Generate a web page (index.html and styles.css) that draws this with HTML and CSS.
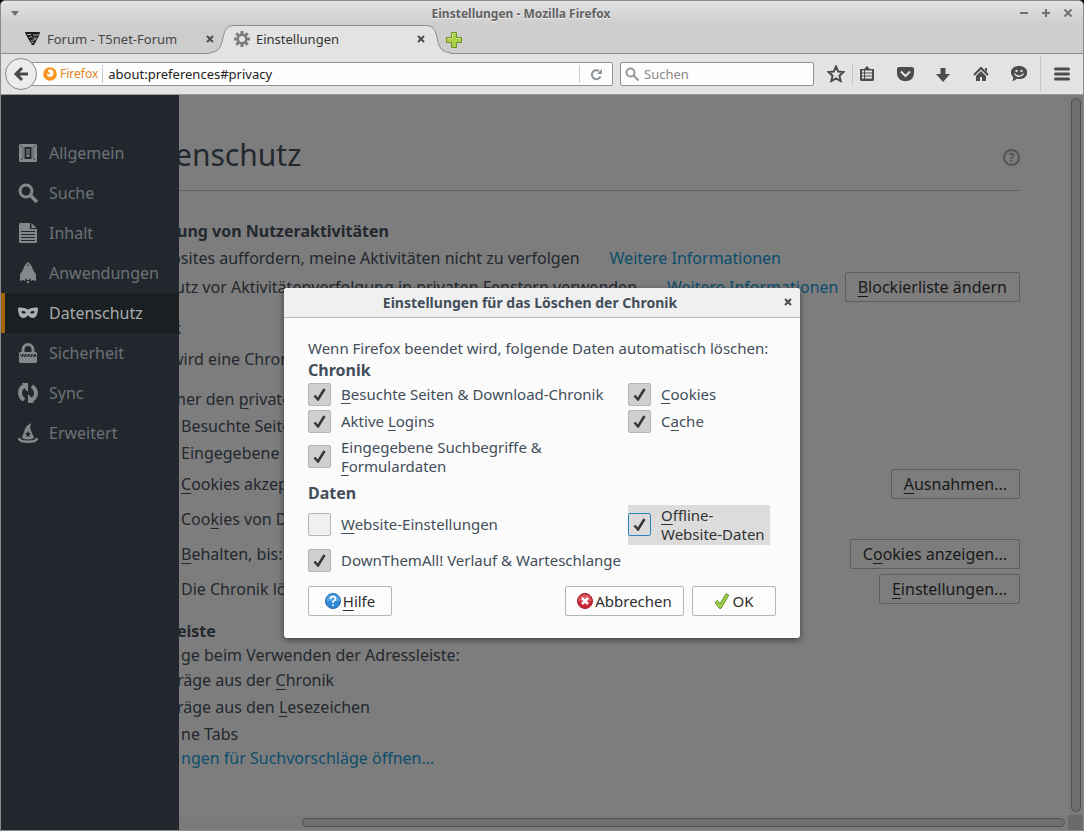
FILE: index.html
```
<!DOCTYPE html>
<html lang="de">
<head>
<meta charset="utf-8">
<title>Einstellungen - Mozilla Firefox</title>
<link rel="stylesheet" href="styles.css">
</head>
<body>
<div class="window">
  <header class="titlebar">
    <button class="wm-button wm-menu" aria-label="Fenstermenü"><svg width="8" height="5"><path d="M0 0h8L4 5z" fill="#707070"/></svg></button>
    <h1 class="window-title">Einstellungen - Mozilla Firefox</h1>
    <div class="wm-buttons">
      <button class="wm-button" aria-label="Minimieren"><svg width="10" height="10"><path d="M1 5h8" stroke="#707070" stroke-width="2"/></svg></button>
      <button class="wm-button" aria-label="Maximieren"><svg width="10" height="10"><path d="M1 5h8M5 1v8" stroke="#707070" stroke-width="2"/></svg></button>
      <button class="wm-button" aria-label="Schließen"><svg width="10" height="10"><path d="M1.500 1.500l7 7M8.500 1.500l-7 7" stroke="#707070" stroke-width="2"/></svg></button>
    </div>
  </header>

  <nav class="tabs" aria-label="Tabs">
    <div class="tab">
      <svg class="tab-icon" width="16" height="16" viewBox="0 0 16 16"><path d="M0 1h15L14 5 9 14H7L1 4z" fill="#1d1d1d"/><path d="M2 3.500h4M8 4h6M4 6.500l3-1M8 7h4M6 9.500l5-1M6 12l3-1" stroke="#aaa" stroke-width="1"/></svg>
      <span class="tab-label">Forum - T5net-Forum</span>
      <button class="tab-close" aria-label="Tab schließen"><svg width="8" height="8"><path d="M1 1l6 6M7 1L1 7" stroke="#4c4c4c" stroke-width="2"/></svg></button>
    </div>
    <div class="tab-active">
      <svg class="curve" width="24" height="29" viewBox="0 0 24 29"><path d="M0 29V28C20 27 6 1 24 .5V29z" fill="#e3e3e3"/><path d="M0 27.500C19 27 7 .5 24 .5" fill="none" stroke="#8e8e8e"/></svg>
      <div class="tab-body">
        <svg class="tab-icon" width="16" height="16" viewBox="0 0 16 16"><g stroke="#7b7b7b" stroke-width="3"><path d="M8 0v16M0 8h16M2.300 2.300l11.400 11.400M13.700 2.300L2.300 13.700"/></g><circle cx="8" cy="8" r="5.400" fill="#7b7b7b"/><circle cx="8" cy="8" r="3" fill="#e3e3e3"/></svg>
        <span class="tab-label">Einstellungen</span>
        <button class="tab-close tab-close-active" aria-label="Tab schließen"><svg width="8" height="8"><path d="M1 1l6 6M7 1L1 7" stroke="#4c4c4c" stroke-width="2"/></svg></button>
      </div>
      <svg class="curve" width="24" height="29" viewBox="0 0 24 29"><path d="M24 29V28C4 27 18 1 0 .5V29z" fill="#e3e3e3"/><path d="M24 27.500C5 27 17 .5 0 .5" fill="none" stroke="#8e8e8e"/></svg>
    </div>
    <button class="new-tab" aria-label="Neuer Tab"><svg width="16" height="16"><path d="M5.500.5h5v5h5v5h-5v5h-5v-5h-5v-5h5z" fill="#a9cf46" stroke="#6f8f24"/><path d="M6.500 5.500v-4h3M1.500 6.500h5M10 6.500h4.500" fill="none" stroke="#cfe68c"/></svg></button>
  </nav>

  <div class="toolbar">
    <button class="back" aria-label="Zurück"><svg width="16" height="16"><path d="M15 8H3M9 2L3 8l6 6" fill="none" stroke="#4a4a4a" stroke-width="3"/></svg></button>
    <div class="url-box">
      <svg width="14" height="14" viewBox="0 0 14 14"><circle cx="7" cy="7" r="6.800" fill="#f7931e"/><path d="M5 3.500c1-1.500 4-1.500 5 .5 1.500 3-.5 6-3 6C5 10 3.500 8.500 4 6.500l2 1 1.500-1L5.500 5z" fill="#fff"/></svg>
      <span class="identity">Firefox</span>
      <input class="url-input" type="text" aria-label="Adresse" value="about:preferences#privacy">
      <button class="reload" aria-label="Neu laden"><svg width="13" height="13" viewBox="0 0 13 13"><path d="M10.500 8.500A4.500 4.500 0 1 1 9 3" fill="none" stroke="#8a9199" stroke-width="2"/><path d="M12 1v5H7z" fill="#8a9199"/></svg></button>
    </div>
    <div class="search-box">
      <svg width="14" height="14"><circle cx="5.500" cy="5.500" r="4" fill="none" stroke="#999" stroke-width="2"/><path d="M8.500 8.500l5 5" stroke="#999" stroke-width="2"/></svg>
      <input class="search-input" type="text" aria-label="Suche" placeholder="Suchen">
    </div>
    <button class="tool tool-star" aria-label="Lesezeichen"><svg width="18" height="18"><path d="M9 1.500l2.200 5 5.300.6-4 3.600 1.200 5.300L9 13.300 4.300 16l1.200-5.300-4-3.600 5.300-.6z" fill="none" stroke="#4c4c4c" stroke-width="2"/></svg></button>
    <button class="tool tool-list" aria-label="Lesezeichenliste"><svg width="16" height="16"><path d="M1 3h4l3-3 3 3h4v11l-1 1H2l-1-1z" fill="#4c4c4c"/><path d="M3 5.500h2M6 5.500h7M3 8.500h2M6 8.500h7M3 11.500h2M6 11.500h7" stroke="#e5e5e5" stroke-width="2"/></svg></button>
    <button class="tool" aria-label="Pocket"><svg width="17" height="16"><path d="M2 1h13q2 0 2 2v4c0 11-17 11-17 0V3q0-2 2-2z" fill="#4c4c4c"/><path d="M4 5.500l4.500 4.500L13 5.500" fill="none" stroke="#e3e3e3" stroke-width="2"/></svg></button>
    <button class="tool" aria-label="Downloads"><svg width="14" height="15"><path d="M4.500 1h5v6H14l-7 8-7-8h4.500z" fill="#4c4c4c"/></svg></button>
    <button class="tool" aria-label="Startseite"><svg width="16" height="16"><path d="M1 9l7-7 7 7" fill="none" stroke="#4c4c4c" stroke-width="2"/><path d="M12 2h2v4l-2-2zM3 10l5-5 5 5v5H9v-4H7v4H3z" fill="#4c4c4c"/></svg></button>
    <button class="tool" aria-label="Hello"><svg width="16" height="16"><path d="M8 0c11 0 11 13 0 13-1 0-1.500 0-2.500-.3Q4 15 1 15q2-2 1-4C-3 6 1 0 8 0z" fill="#4c4c4c"/><circle cx="5.500" cy="5" r="1.200" fill="#e3e3e3"/><circle cx="10.500" cy="5" r="1.200" fill="#e3e3e3"/><path d="M3.500 7.500c2 3.500 7 3.500 9 0" fill="none" stroke="#e3e3e3" stroke-width="1.500"/></svg></button>
    <button class="tool tool-menu" aria-label="Menü"><svg width="16" height="14"><path d="M1.500 2h13M1.500 7h13M1.500 12h13" stroke="#4c4c4c" stroke-width="3" stroke-linecap="round"/></svg></button>
  </div>

  <div class="page">
    <nav class="sidebar" aria-label="Kategorien">
      <a class="category" href="#general"><svg width="20" height="20"><path d="M2 1h16l1 1v16l-1 1H2l-1-1V2z" fill="#85888a"/><path d="M5 4v12M15 4v12" stroke="#5c6064"/><path d="M7.500 5h5v10h-5z" fill="none" stroke="#22272e" stroke-width="2"/><path d="M10 7v5" stroke="#22272e" stroke-width="1"/><path d="M3 3.500h1M16 3.500h1M3 16.500h1M16 16.500h1" stroke="#22272e"/></svg>Allgemein</a>
      <a class="category" href="#search"><svg width="20" height="20"><circle cx="8" cy="8" r="6" fill="none" stroke="#85888a" stroke-width="3"/><path d="M12 12l7 7" stroke="#85888a" stroke-width="3.500"/></svg>Suche</a>
      <a class="category" href="#content"><svg width="20" height="20"><path d="M2 0h10v6h7v13l-1 1H2l-1-1V1z" fill="#85888a"/><path d="M13.500 0l5 5h-5z" fill="#85888a"/><path d="M3 8.500h14M3 11.500h14M3 14.500h14M3 17.500h14" stroke="#22272e"/></svg>Inhalt</a>
      <a class="category" href="#applications"><svg width="20" height="22"><path d="M10 0c3 2 4.500 5 5 8l3 4v7l-3-1-2 1-1-3-1 2H9l-1-2-1 3-2-1-3 1v-7l3-4c.5-3 2-6 5-8z" fill="#85888a"/><path d="M8 4l2-2 2 2z" fill="#4c5156"/><path d="M8.500 19h3L10 22z" fill="#85888a"/></svg>Anwendungen</a>
      <a class="category category-selected" href="#privacy"><svg width="20" height="12"><path d="M0 1c3-1 7 0 10 1.500C13 1 17 0 20 1c0 6-2 10-5 10-2 0-4-1-5-3-1 2-3 3-5 3-3 0-5-4-5-10z" fill="#adb0b1"/><path d="M3 5q2.500-2 5 .5Q6 8 3 5zM17 5q-2.500-2-5 .5Q14 8 17 5z" fill="#1a1f22"/></svg>Datenschutz</a>
      <a class="category" href="#security"><svg width="20" height="20"><path d="M5 11V6.500a5 5 0 0 1 10 0V11" fill="none" stroke="#85888a" stroke-width="3"/><path d="M2 9h16l1 1v9l-1 1H2l-1-1v-9z" fill="#85888a"/><path d="M2 11l2 3 1-3 2 3 1-3 2 3 1-3 2 3 1-3 2 3 1-3 1 3" fill="none" stroke="#22272e"/></svg>Sicherheit</a>
      <a class="category" href="#sync"><svg width="20" height="20"><path d="M8 2.500Q2 4 2 10q0 4 4 7M12 17.500q6-1.500 6-7.500 0-4-4-7" fill="none" stroke="#85888a" stroke-width="4"/><path d="M4 0h6v9L7 6zM16 20h-6v-9l3 3z" fill="#85888a"/></svg>Sync</a>
      <a class="category" href="#advanced"><svg width="20" height="20"><path d="M13 0l-1 5 4 10q-6 3-12 0L7 6q2-4 6-6z" fill="#85888a"/><path d="M1 15c0 5 18 5 18 0" fill="none" stroke="#85888a" stroke-width="2.500"/><path d="M10 8l1 2 2 .3-1.500 1.500.3 2.200-1.800-1-1.800 1 .3-2.200L7 10.300l2-.3z" fill="#22272e"/></svg>Erweitert</a>
    </nav>

    <main class="content">
      <div class="content-head">
        <h2 class="content-title">enschutz</h2>
        <a class="help" href="#help" aria-label="Hilfe">?</a>
      </div>

      <section class="group group-first">
        <h3 class="group-title">ung von Nutzeraktivitäten</h3>
        <p class="row cut">bsites auffordern<!-- -->, meine Aktivitäten nicht zu verfolgen<a class="link more" href="#dnt">Weitere Informationen</a></p>
        <div class="row row-control"><span>utz vor Aktivitätenverfolgung in privaten Fenstern verwenden</span><a class="link more" href="#tracking">Weitere Informationen</a><button class="button"><u>B</u>lockierliste ändern</button></div>
      </section>

      <section class="group">
        <h3 class="group-title cut">k</h3>
        <p class="row row-mode cut">wird eine Chronik</p>
        <p class="row row-private cut">mer den <u>p</u>rivaten</p>
        <p class="row inset">Besuchte Seiten</p>
        <p class="row inset">Eingegebene <u>S</u>uch</p>
        <div class="row row-wide inset"><span><u>C</u>ookies akzeptieren</span><button class="button"><u>A</u>usnahmen...</button></div>
        <div class="row row-wide inset"><span>Coo<u>k</u>ies von Dritt</span></div>
        <div class="row row-wide inset"><span><u>B</u>ehalten, bis:</span><button class="button">C<u>o</u>okies anzeigen...</button></div>
        <div class="row row-wide inset"><span>Die Chronik löschen</span><button class="button"><u>E</u>instellungen...</button></div>
      </section>

      <section class="group">
        <h3 class="group-title">eiste</h3>
        <p class="row row-tight inset">ge beim Verwenden der Adressleiste:</p>
        <p class="row">räge aus der <u>C</u>hronik</p>
        <p class="row">räge aus den <u>L</u>esezeichen</p>
        <p class="row inset">ne Tabs</p>
        <p class="row row-tight inset"><a class="link" href="#suggest">ngen für Suchvorschläge öffnen...</a></p>
      </section>
    </main>

    <div class="track track-y"><div class="thumb"></div></div>
    <div class="track track-x"><div class="thumb"></div></div>
    <div class="track-corner"></div>

    <div class="overlay">
      <div class="dialog" role="dialog" aria-labelledby="dialog-title">
        <div class="dialog-head">
          <h2 class="dialog-title" id="dialog-title">Einstellungen für das Löschen der Chronik</h2>
          <button class="dialog-close" aria-label="Schließen"><svg width="8" height="8"><path d="M1 1l6 6M7 1L1 7" stroke="#4c4c4c" stroke-width="2"/></svg></button>
        </div>
        <form class="dialog-body">
          <p class="intro">Wenn Firefox beendet wird, folgende Daten automatisch löschen:</p>
          <h3 class="legend">Chronik</h3>
          <div class="options">
            <label class="option"><input class="check" type="checkbox" checked><span><u>B</u>esuchte Seiten &amp; Download-Chronik</span></label>
            <label class="option"><input class="check" type="checkbox" checked><span><u>C</u>ookies</span></label>
            <label class="option"><input class="check" type="checkbox" checked><span>Aktive <u>L</u>ogins</span></label>
            <label class="option"><input class="check" type="checkbox" checked><span>C<u>a</u>che</span></label>
            <label class="option option-tall"><input class="check" type="checkbox" checked><span>Eingegebene Suchbegriffe &amp;<br><u>F</u>ormulardaten</span></label>
          </div>
          <h3 class="legend legend-data">Daten</h3>
          <div class="options">
            <label class="option option-site"><input class="check" type="checkbox"><span><u>W</u>ebsite-Einstellungen</span></label>
            <label class="option option-site option-focus"><input class="check" type="checkbox" checked><span><u>O</u>ffline-<br>Website-Daten</span></label>
            <label class="option option-last"><input class="check" type="checkbox" checked><span>DownThemAll! Verlauf &amp; Warteschlange</span></label>
          </div>
          <div class="actions">
            <button class="action action-help" type="button"><svg width="16" height="16"><circle cx="8" cy="8" r="7.500" fill="#3189d6" stroke="#2367aa"/><path d="M1.500 8a6.500 6.500 0 0 1 13 0z" fill="#5aa9e8"/><path d="M5.500 6q0-2.500 2.500-2.500T10.500 6Q10.500 7.500 8 8.500V10M8 11.300v1.700" fill="none" stroke="#fff" stroke-width="1.500"/></svg><span><u>H</u>ilfe</span></button>
            <button class="action action-cancel" type="button"><svg width="16" height="16"><circle cx="8" cy="8" r="7.500" fill="#cc2a3a" stroke="#9c1b28"/><path d="M1.500 8a6.500 6.500 0 0 1 13 0z" fill="#dc5560"/><path d="M5 5l6 6M11 5l-6 6" stroke="#fff" stroke-width="2.500"/></svg>Abbrechen</button>
            <button class="action action-ok" type="button"><svg width="16" height="16"><path d="M1 9.500l2.500-2 2.500 3.500L12 .8l2.800 1.400L7 15.400H5.500z" fill="#9fd046" stroke="#5f8f22"/></svg>OK</button>
          </div>
        </form>
      </div>
    </div>
  </div>
</div>
</body>
</html>
```
FILE: styles.css
```
* { box-sizing: border-box; }
html { background: #000; }
body {
  margin: 0;
  font-family: "Noto Sans", "Open Sans", sans-serif;
  font-size: 16px;
  color: #424e5a;
}
h1, h2, h3, p { margin: 0; font-weight: normal; }
button, input { font: inherit; color: inherit; margin: 0; padding: 0; border: 0; background: none; }
a { color: inherit; text-decoration: none; }
u { text-decoration: underline; text-decoration-thickness: 1px; text-underline-offset: 3px; }
svg { display: block; flex: none; }

.window {
  height: 100vh;
  display: flex;
  flex-direction: column;
  overflow: hidden;
  border: 1px solid #8b8b8b;
  border-radius: 5px 5px 0 0;
  background: linear-gradient(#e2e2e2, #cdcdcd 24px);
  font-size: 13px;
}

/* Title bar */
.titlebar { height: 24px; flex: none; display: flex; align-items: center; }
.wm-button { width: 22px; height: 22px; display: flex; align-items: center; justify-content: center; }
.wm-menu { width: 28px; }
.wm-buttons { display: flex; width: 70px; }
.window-title { flex: 1; text-align: center; font-size: 12px; font-weight: bold; color: #636363; text-shadow: 0 1px #eee; }

/* Tabs */
.tabs { height: 29px; flex: none; display: flex; box-shadow: inset 0 -1px #8e8e8e; }
.tab { flex: none; width: 217px; display: flex; align-items: center; padding-left: 24px; padding-bottom: 2px; color: #444; }
.tab-icon { margin-right: 6px; }
.tab-label { flex: 1; white-space: nowrap; }
.tab-close { width: 16px; height: 20px; display: flex; align-items: center; justify-content: center; }
.tab-close-active { margin-right: -3px; }
.tab-active { display: flex; margin: 0 0 -1px -8px; color: #333; }
.tab-body { width: 192px; display: flex; align-items: center; padding-bottom: 4px; background: #e3e3e3; border-top: 1px solid #8e8e8e; }
.curve { height: 29px; }
.new-tab { width: 16px; display: flex; align-items: center; margin-left: -4px; }

/* Toolbar */
.toolbar { height: 41px; flex: none; display: flex; align-items: center; padding-left: 4px; background: #e3e3e3; border-bottom: 1px solid #9a9a9a; }
.back { width: 32px; height: 32px; flex: none; border: 1px solid #8a8a8a; border-radius: 50%; background: #ececec; display: flex; align-items: center; justify-content: center; z-index: 1; }
.url-box, .search-box { height: 24px; display: flex; align-items: center; background: #fdfdfd; border: 1px solid #929292; border-radius: 2px; min-width: 0; }
.url-box { flex: 1; margin-left: -7px; padding-left: 12px; }
.identity { margin-left: 3px; padding-right: 4px; font-size: 12px; color: #e5831c; border-right: 1px solid #ccc; line-height: 18px; }
.url-input { flex: 1; min-width: 0; padding: 0 5px; color: #222; outline: 0; }
.reload { width: 33px; height: 18px; border-left: 1px solid #ccc; display: flex; align-items: center; justify-content: center; }
.search-box { flex: 0 1 194px; margin-left: 7px; padding: 0 4px; gap: 5px; }
.search-input { flex: 1; min-width: 0; outline: 0; }
.search-input::placeholder { color: #8a8a8a; opacity: 1; }
.tool { width: 38px; height: 36px; flex: none; display: flex; align-items: center; justify-content: center; }
.tool-star { width: 32px; margin-left: 6px; }
.tool-list { width: 30px; margin-right: 4px; background: linear-gradient(#c4c4c4, #c4c4c4) left center / 1px 20px no-repeat; }
.tool-menu { width: 43px; margin-left: 2px; border-left: 1px solid #c8c8c8; }

/* Preferences page */
.page {
  flex: 1;
  min-height: 0;
  position: relative;
  display: grid;
  grid-template-columns: 178px minmax(0, 1fr) 15px;
  grid-template-rows: minmax(0, 1fr) 15px;
  background: #7d7d7d;
  font-size: 16px;
  color: #23282e;
}
.sidebar { grid-row: 1 / 3; padding-top: 38px; background: #22272e; color: #6d7276; }
.category { height: 40px; display: flex; align-items: center; gap: 11px; padding-left: 17px; }
.category-selected { background: #1a1f22; color: #a7abac; padding-left: 13px; border-left: 4px solid #a56308; }

.content { overflow: hidden; padding-right: 48px; white-space: nowrap; }
.content-head { height: 96px; padding-top: 24px; display: flex; align-items: center; justify-content: space-between; border-bottom: 1px solid #626262; }
.content-title { font-size: 30px; margin-left: -4px; }
.help { width: 17px; height: 17px; margin-top: 6px; border: 2px solid #535353; border-radius: 50%; font-size: 12px; line-height: 13px; font-weight: bold; text-align: center; color: #535353; }
.group { padding-top: 13px; }
.group-first { padding-top: 28px; }
.group-title { font-weight: bold; font-size: 16px; height: 25px; line-height: 25px; margin-left: -2px; }
.row { display: flex; align-items: center; height: 27px; margin-left: -2px; white-space: pre; }
.cut { margin-left: -8px; }
.inset { margin-left: 2px; }
.row-control { height: 32px; margin-left: -4px; }
.row-wide { height: 35px; }
.row-tight { height: 22px; }
.row-mode { margin-top: 4px; }
.row-private { margin-top: 13px; }
.link { color: #0c4e6c; }
.more { margin-left: 30px; }
.button { height: 30px; margin-left: auto; padding: 0 12px; border: 1px solid #5d5d5d; border-radius: 2px; color: #191919; }

.track { background: #7a7a7a; border-radius: 3px; }
.track-y { padding: 3px 2px 3px 3px; }
.track-x { grid-column: 2; padding: 3px 3px 3px 123px; }
.thumb { height: 100%; background: #6f6f6f; border: 1px solid #4f4f4f; border-radius: 5px; }
.track-corner { background: #6a6a6a; }

/* Dialog */
.overlay { position: absolute; inset: 0; display: flex; align-items: center; justify-content: center; }
.dialog { width: 516px; background: #fbfbfb; border-radius: 3px; color: #424e5a; font-size: 15px; box-shadow: 0 2px 6px rgba(0, 0, 0, .5); overflow: hidden; }
.dialog-head { height: 30px; display: flex; align-items: center; background: #f0f0f0; border-bottom: 1px solid #b9b9b9; }
.dialog-title { flex: 1; text-align: center; font-size: 14px; font-weight: bold; }
.dialog-close { width: 24px; height: 24px; display: flex; align-items: center; justify-content: center; }
.dialog-body { padding: 19px 24px 22px; white-space: nowrap; }
.intro { line-height: 23px; }
.legend { font-size: 16px; font-weight: bold; line-height: 21px; }
.legend-data { padding: 4px 0 1px; }
.options { display: grid; grid-template-columns: 320px 1fr; }
.option { height: 27px; display: flex; align-items: center; gap: 10px; line-height: 19px; }
.option-tall { height: 44px; }
.option-site { height: 40px; }
.option-last { height: 32px; }
.option-focus { justify-self: start; padding-right: 5px; background: #dcdcdc; color: #333; }
.check { appearance: none; width: 23px; height: 23px; flex: none; background: #f0f0f0; border: 1px solid #b5b5b5; border-radius: 2px; }
.check:checked { background: #cfcfcf url("data:image/svg+xml,%3Csvg xmlns='http://www.w3.org/2000/svg' width='13' height='13'%3E%3Cpath d='M1.500 7.500l3.500 4L11.500 1' fill='none' stroke='%23383838' stroke-width='2.500'/%3E%3C/svg%3E") center no-repeat; }
.option-focus .check { background-color: #dcdcdc; border-color: #2a86bd; }
.actions { display: flex; margin-top: 9px; }
.action { height: 30px; display: flex; align-items: center; justify-content: center; gap: 2px; border: 1px solid #b5b5b5; border-radius: 2px; background: #fcfcfc; color: #2e2e2e; }
.action-help { width: 84px; margin-right: auto; }
.action-cancel { width: 119px; }
.action-ok { width: 84px; margin-left: 8px; }
```
